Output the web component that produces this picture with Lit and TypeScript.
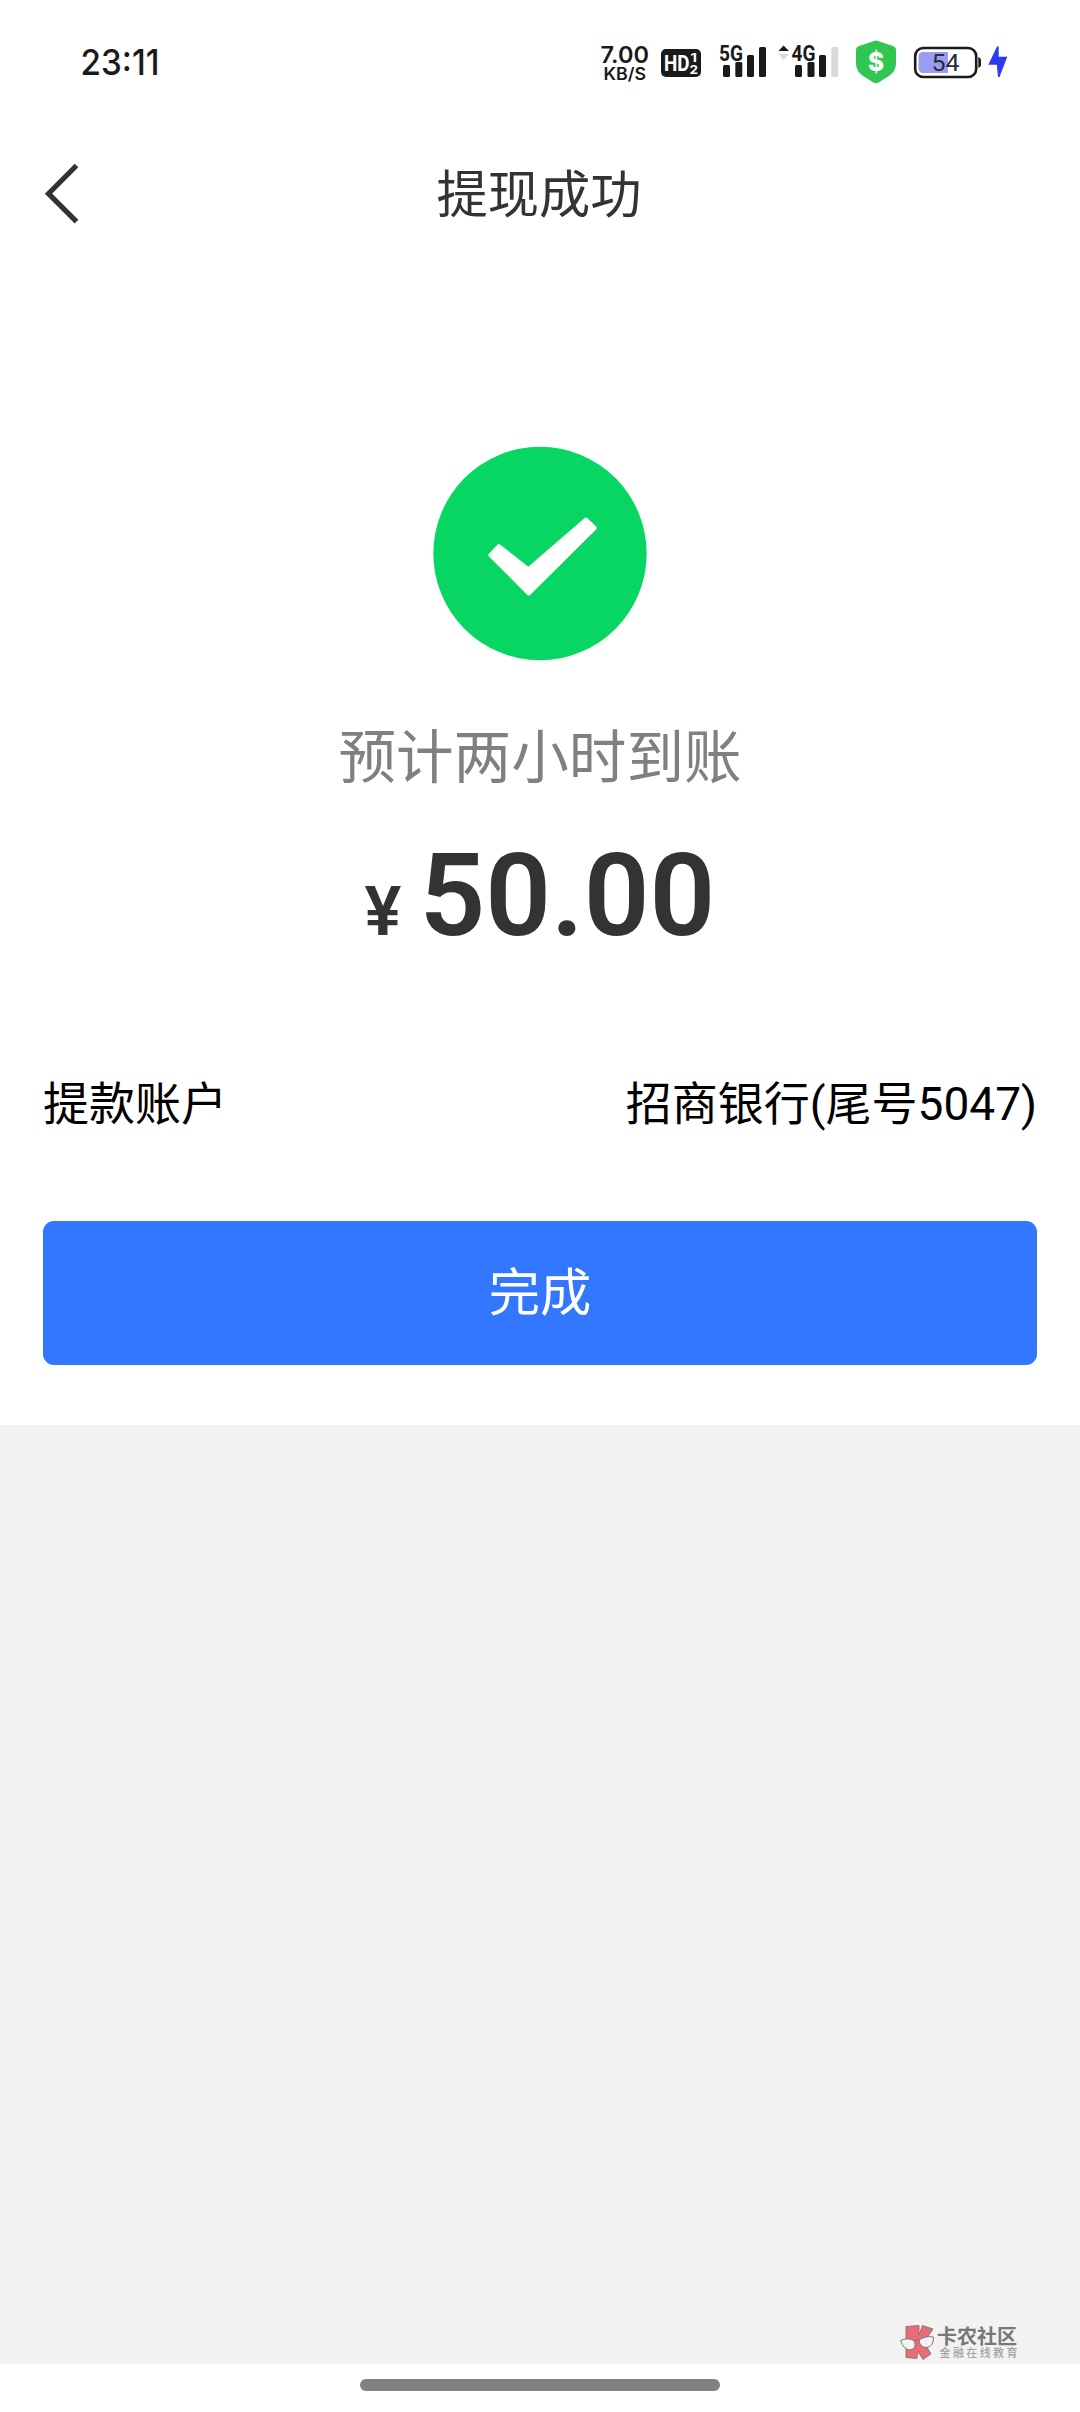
import { LitElement, html, css } from "lit";
import { customElement } from "lit/decorators.js";

@customElement("status-bar")
class StatusBar extends LitElement {
  static styles = css`
    :host { display: flex; align-items: flex-start; justify-content: space-between; height: 84px; padding: 40px 71px 0 80px; box-sizing: border-box; }
    svg { display: block; height: 44px; flex: none; overflow: visible; }
    .group { display: flex; }
    .hd { margin-left: 12px; }
    .sig { margin-left: 18px; }
    .sig2 { margin-left: 10px; }
    .shield { margin-left: 17px; }
    .battery { margin-left: 17px; }
    .bolt { margin-left: 6px; }
    text { font-family: Inter, "Noto Sans", sans-serif; fill: #1a1a1a; }
    .time { font-size: 36px; font-weight: 500; }
    .speed { font-size: 23px; font-weight: 600; }
    .unit { font-size: 17px; font-weight: 600; }
    .gen { font-family: Roboto, sans-serif; font-size: 22px; font-weight: 700; }
    .hdt { font-family: Roboto, sans-serif; font-size: 22.5px; font-weight: 700; fill: #fff; }
    .num { font-size: 12px; font-weight: 700; fill: #fff; }
    .pct { font-family: Roboto, sans-serif; font-size: 24px; font-weight: 400; fill: #2a2a3a; }
    .dollar { font-size: 26px; font-weight: 800; fill: #fff; }
    .ink { fill: #1a1a1a; }
    .dim { fill: #d9d9d9; }
  `;
  render() {
    return html`
      <svg width="80" viewBox="80 40 80 44"><text class="time" x="80.5" y="75" textLength="79" lengthAdjust="spacingAndGlyphs">23:11</text></svg>
      <div class="group">
        <svg width="49" viewBox="600 40 49 44">
          <text class="speed" x="600.5" y="63" textLength="48.5" lengthAdjust="spacingAndGlyphs">7.00</text>
          <text class="unit" x="603.5" y="80" textLength="42.5" lengthAdjust="spacingAndGlyphs">KB/S</text>
        </svg>
        <svg class="hd" width="41" viewBox="661 40 41 44">
          <rect class="ink" x="661" y="49" width="40" height="28" rx="5" />
          <text class="hdt" x="664" y="71" textLength="25.5" lengthAdjust="spacingAndGlyphs">HD</text>
          <text class="num" x="690.5" y="61.8" textLength="6.5" lengthAdjust="spacingAndGlyphs">1</text>
          <text class="num" x="689.5" y="73.5" textLength="8.5" lengthAdjust="spacingAndGlyphs">2</text>
        </svg>
        <svg class="sig" width="48" viewBox="720 40 48 44">
          <text class="gen" x="719" y="60.5" textLength="24" lengthAdjust="spacingAndGlyphs">5G</text>
          <rect class="ink" x="723" y="65" width="7" height="12" rx="1.5" />
          <rect class="ink" x="735.3" y="62" width="7" height="15" rx="1.5" />
          <rect class="ink" x="747" y="55" width="7" height="22" rx="1.5" />
          <rect class="ink" x="759" y="47" width="7" height="30" rx="1.5" />
        </svg>
        <svg class="sig2" width="61" viewBox="778 40 61 44">
          <path class="ink" d="M778.5 51 L783.5 45.5 L789 51Z" />
          <path class="dim" d="M778.5 54 L783.5 60 L789 54Z" />
          <text class="gen" x="791.5" y="60.5" textLength="24" lengthAdjust="spacingAndGlyphs">4G</text>
          <rect class="ink" x="795" y="65" width="7" height="12" rx="1.5" />
          <rect class="ink" x="807.5" y="62" width="7" height="15" rx="1.5" />
          <rect class="ink" x="819" y="55" width="7" height="22" rx="1.5" />
          <rect class="dim" x="831.3" y="47" width="7" height="30" rx="1.5" />
        </svg>
        <svg class="shield" width="41" viewBox="856 40 41 44">
          <path fill="#2fc651" d="M874 41 Q876 40 878 41 L893 46 Q896 47 896 50 V64 Q896 71 889 76 L879 82.3 Q876 84 873 82.3 L863 76 Q856 71 856 64 V50 Q856 47 859 46Z" />
          <text class="dollar" x="868" y="71" textLength="16" lengthAdjust="spacingAndGlyphs">$</text>
        </svg>
        <svg class="battery" width="68" viewBox="914 40 68 44">
          <rect x="915.2" y="48" width="61" height="29" rx="8" fill="#fff" stroke="#1a1a1a" stroke-width="2.6" />
          <path fill="#999df4" d="M923 52 H948 V73 H923 Q918.5 73 918.5 68 V57 Q918.5 52 923 52Z" />
          <path class="ink" d="M978.3 57 Q981 58 981 60 V65 Q981 67 978.3 68Z" />
          <text class="pct" x="931.5" y="71" textLength="28" lengthAdjust="spacingAndGlyphs">54</text>
        </svg>
        <svg class="bolt" width="21" viewBox="988 40 21 44">
          <path fill="#2b3cf0" d="M997 46.5 L988.3 64.8 H996.8 L998 77 H999.5 L1007.3 56.8 H998.7 L998.7 46.5Z" />
        </svg>
      </div>
    `;
  }
}

@customElement("brand-mark")
class BrandMark extends LitElement {
  static styles = css`
    :host { display: block; }
    svg { display: block; overflow: visible; }
    text { font-family: "Noto Sans CJK SC", sans-serif; }
    .name { font-size: 20px; font-weight: 700; fill: #777; }
    .tag { font-size: 11px; font-weight: 500; fill: #a2a2a2; }
  `;
  render() {
    return html`
      <svg width="120" height="40" viewBox="900 2324 120 40">
        <path fill="#ec6b76" stroke="#777" stroke-width="0.9" stroke-linejoin="round"
          d="M906 2326.5 L919 2325.5 V2335 L922.5 2325.5 L933 2329 L924 2342 L931 2354 L923 2359.5 L917.5 2351 L917 2358.5 L906 2357.5Z" />
        <g fill="#f3f3f3" stroke="#777" stroke-width="1">
          <path d="M900.5 2340.5 Q908 2337 914.5 2341 Q917 2349 910 2350 Q903.5 2349.5 900.5 2340.5Z" />
          <path d="M919 2340 Q925 2335.5 933.5 2337 Q933.5 2346.5 927 2347.5 Q920 2348 919 2340Z" />
          <path fill="none" d="M914.5 2341 Q917 2338.5 919 2340" />
        </g>
        <text class="name" x="937" y="2343.5" textLength="80" lengthAdjust="spacing">卡农社区</text>
        <text class="tag" x="939.5" y="2357" textLength="78" lengthAdjust="spacing">金融在线教育</text>
      </svg>
    `;
  }
}

@customElement("app-root")
class AppRoot extends LitElement {
  static styles = css`
    :host { display: flex; flex-direction: column; height: 2412px; width: 1080px; background: #fff; font-family: Roboto, "Noto Sans CJK SC", sans-serif; color: #333; overflow: hidden; }
    .nav { display: grid; grid-template-columns: 120px 1fr 122px; align-items: center; height: 220px; flex: none; }
    .back { display: block; margin-left: 43px; }
    .title { text-align: center; font-size: 51.3px; line-height: 76px; font-weight: 400; margin: 0; padding-top: 3px; }
    .main { display: flex; flex-direction: column; height: 1121px; padding-top: 141px; box-sizing: border-box; flex: none; }
    .result { display: flex; flex-direction: column; align-items: center; flex: none; }
    .tip { font-size: 57.6px; line-height: 80px; color: #808080; margin-top: 58px; }
    .amount { display: flex; align-items: baseline; font-weight: 600; line-height: 136px; margin-top: 29px; }
    .cur { font-size: 69.1px; margin-right: 18px; }
    .value { font-size: 115.2px; }
    .account { display: flex; justify-content: space-between; font-size: 46px; line-height: 68px; color: #000; padding: 0 43px; margin-top: 90px; flex: none; }
    .done { display: block; height: 144px; margin: 83px 43px 0; border: 0; border-radius: 11px; background: #3377ff; color: #fff; font: inherit; font-size: 51.3px; line-height: 142px; padding: 2px 0 0; box-sizing: border-box; flex: none; }
    .filler { background: #f2f2f2; display: flex; justify-content: flex-end; align-items: flex-end; padding-right: 60px; box-sizing: border-box; height: 939px; flex: none; }
    .home { display: flex; justify-content: center; padding-top: 15px; }
    .pill { width: 360px; height: 12px; border-radius: 6px; background: #808080; }
  `;
  render() {
    return html`
      <status-bar></status-bar>
      <header class="nav">
        <svg class="back" width="40" height="64" viewBox="43 162 40 64" fill="none" stroke="#333" stroke-width="5.2"><path d="M76.5 165.5 L48.5 193.7 L76.5 221.7" /></svg>
        <h1 class="title">提现成功</h1>
      </header>
      <main class="main">
        <section class="result">
          <svg width="216" height="216" viewBox="432 445 216 216">
            <circle cx="540" cy="553.5" r="106.7" fill="#07d762" />
            <path fill="#fff" stroke="#fff" stroke-width="4" stroke-linejoin="round" d="M490.3 555 L498.8 546 L528.4 569.3 L586 519.5 L594.7 528 L528.7 593.5Z" />
          </svg>
          <div class="tip">预计两小时到账</div>
          <div class="amount"><span class="cur">¥</span><span class="value">50.00</span></div>
        </section>
        <div class="account"><span>提款账户</span><span>招商银行(尾号5047)</span></div>
        <button class="done">完成</button>
      </main>
      <div class="filler"><brand-mark></brand-mark></div>
      <footer class="home"><div class="pill"></div></footer>
    `;
  }
}
